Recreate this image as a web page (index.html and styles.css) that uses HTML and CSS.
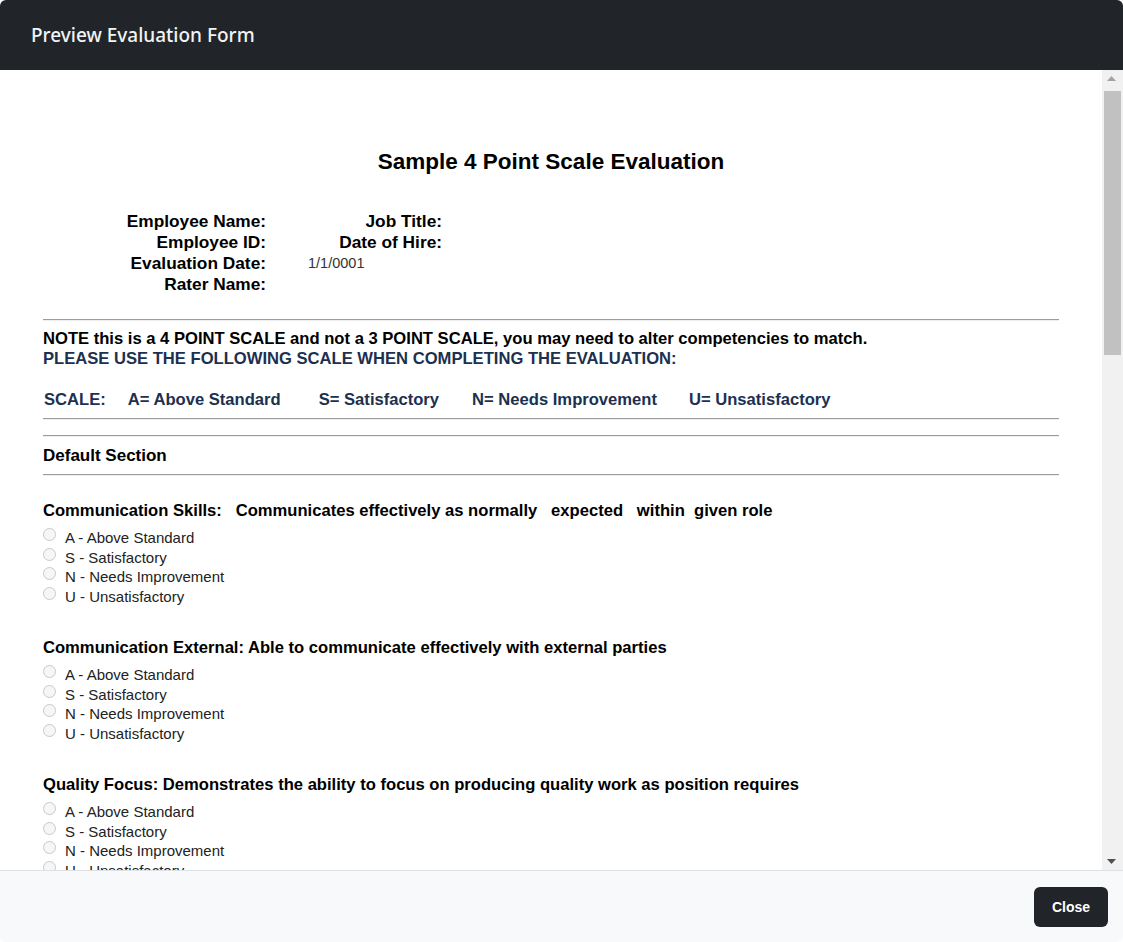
FILE: index.html
```html
<!DOCTYPE html>
<html lang="en">
<head>
  <meta charset="UTF-8">
  <meta name="viewport" content="width=device-width, initial-scale=1.0">
  <title>Preview Evaluation Form</title>
  <link rel="stylesheet" href="styles.css">
</head>
<body>
  <div class="modal">
    <div class="modal-header">
      <h5>Preview Evaluation Form</h5>
    </div>
    <div class="modal-body">
      <div class="preview">
        <h2 class="form-title">Sample 4 Point Scale Evaluation</h2>
        <div class="info-grid">
          <div class="lbl">Employee Name:</div>
          <div class="lbl">Job Title:</div>
          <div class="lbl">Employee ID:</div>
          <div class="lbl">Date of Hire:</div>
          <div class="lbl">Evaluation Date:</div>
          <div class="val">1/1/0001</div>
          <div class="lbl">Rater Name:</div>
          <div></div>
        </div>
        <hr class="hr-info">
        <p class="note">NOTE this is a 4 POINT SCALE and not a 3 POINT SCALE, you may need to alter competencies to match.</p>
        <p class="scale-intro">PLEASE USE THE FOLLOWING SCALE WHEN COMPLETING THE EVALUATION:</p>
        <div class="scale">
          <span class="s-head">SCALE:</span>
          <span class="s-a">A= Above Standard</span>
          <span class="s-s">S= Satisfactory</span>
          <span class="s-n">N= Needs Improvement</span>
          <span>U= Unsatisfactory</span>
        </div>
        <hr class="hr-scale">
        <hr class="hr-section">
        <h3 class="section-title">Default Section</h3>
        <hr class="hr-after">

        <div class="question">
          <div class="q-title">Communication Skills:   Communicates effectively as normally   expected   within  given role</div>
          <label class="opt"><span class="radio"></span>A - Above Standard</label>
          <label class="opt"><span class="radio"></span>S - Satisfactory</label>
          <label class="opt"><span class="radio"></span>N - Needs Improvement</label>
          <label class="opt"><span class="radio"></span>U - Unsatisfactory</label>
        </div>

        <div class="question">
          <div class="q-title">Communication External: Able to communicate effectively with external parties</div>
          <label class="opt"><span class="radio"></span>A - Above Standard</label>
          <label class="opt"><span class="radio"></span>S - Satisfactory</label>
          <label class="opt"><span class="radio"></span>N - Needs Improvement</label>
          <label class="opt"><span class="radio"></span>U - Unsatisfactory</label>
        </div>

        <div class="question">
          <div class="q-title">Quality Focus: Demonstrates the ability to focus on producing quality work as position requires</div>
          <label class="opt"><span class="radio"></span>A - Above Standard</label>
          <label class="opt"><span class="radio"></span>S - Satisfactory</label>
          <label class="opt"><span class="radio"></span>N - Needs Improvement</label>
          <label class="opt"><span class="radio"></span>U - Unsatisfactory</label>
        </div>
      </div>
      <div class="scrollbar">
        <div class="sb-btn"><svg width="9" height="5" viewBox="0 0 9 5"><path d="M0 5 L4.5 0 L9 5 Z" fill="#a3a3a3"/></svg></div>
        <div class="sb-track"><div class="sb-thumb"></div></div>
        <div class="sb-btn"><svg width="9" height="5" viewBox="0 0 9 5"><path d="M0 0 L9 0 L4.5 5 Z" fill="#505050"/></svg></div>
      </div>
    </div>
    <div class="modal-footer">
      <button class="btn-close">Close</button>
    </div>
  </div>
</body>
</html>
```

FILE: styles.css
```css
html, body {
  margin: 0;
  padding: 0;
  height: 100%;
}
body {
  font-family: "Liberation Sans", Arial, sans-serif;
  background-color: #fff;
  overflow: hidden;
}
.modal {
  display: flex;
  flex-direction: column;
  height: 942px;
  border-radius: 6px;
  overflow: hidden;
  background-color: #fff;
}
.modal-header {
  height: 70px;
  flex: none;
  display: flex;
  align-items: center;
  padding: 0 31px;
  background-color: #212529;
}
.modal-header h5 {
  margin: 0;
  font-family: "Noto Sans", sans-serif;
  font-size: 19px;
  font-weight: 500;
  color: #f1f3f5;
}
.modal-body {
  flex: 1;
  display: flex;
  min-height: 0;
  overflow: hidden;
}
.preview {
  flex: 1;
  padding: 78px 43px 0 43px;
  overflow: hidden;
  color: #000;
}
.form-title {
  margin: 0 0 35px;
  text-align: center;
  font-size: 22.5px;
  line-height: 28px;
  font-weight: bold;
}
.info-grid {
  display: grid;
  grid-template-columns: 223px 176px;
  font-size: 17.3px;
  line-height: 21px;
  font-weight: bold;
}
.info-grid .lbl {
  text-align: right;
}
.info-grid .val {
  font-weight: normal;
  font-size: 14.5px;
  color: #333;
  padding-left: 42px;
}
hr {
  margin: 0;
  border: 0;
  border-top: 1px solid #9c9c9c;
  border-bottom: 1px solid #eee;
}
.hr-info {
  margin-top: 24px;
}
.note {
  margin: 8px 0 0;
  font-size: 16.6px;
  line-height: 20px;
  font-weight: bold;
}
.scale-intro {
  margin: 0;
  font-size: 16.6px;
  line-height: 20px;
  font-weight: bold;
  color: #1c3050;
}
.scale {
  margin: 21px 0 0 1px;
  font-size: 16.6px;
  line-height: 20px;
  font-weight: bold;
  color: #1c3050;
  display: flex;
}
.scale span {
  margin-right: 32px;
}
.scale .s-head {
  margin-right: 22px;
}
.scale .s-a {
  margin-right: 38px;
}
.scale .s-s {
  margin-right: 33px;
}
.hr-scale {
  margin-top: 8px;
}
.hr-section {
  margin-top: 15px;
}
.section-title {
  margin: 8px 0 0;
  font-size: 17px;
  line-height: 22px;
  font-weight: bold;
}
.hr-after {
  margin-top: 7px;
}
.question {
  margin-top: 25px;
  height: 112px;
}
.q-title {
  white-space: pre-wrap;
  font-size: 16.6px;
  line-height: 20px;
  font-weight: bold;
  margin-bottom: 7px;
}
.opt {
  display: flex;
  align-items: flex-start;
  font-size: 15px;
  line-height: 19.5px;
  color: #222;
}
.radio {
  width: 11px;
  height: 11px;
  margin: 0 9px 0 0;
  border: 1px solid #c9c9c9;
  border-radius: 50%;
  background-color: #f6f6f6;
  flex: none;
}
.scrollbar {
  width: 21px;
  flex: none;
  display: flex;
  flex-direction: column;
  background-color: #f1f1f1;
}
.sb-btn {
  height: 17px;
  display: flex;
  align-items: center;
  justify-content: center;
  padding-right: 2px;
}
.sb-track {
  flex: 1;
  padding: 4px 2px 0;
}
.sb-thumb {
  height: 264px;
  background-color: #c1c1c1;
}
.modal-footer {
  height: 71px;
  flex: none;
  display: flex;
  align-items: center;
  justify-content: flex-end;
  padding: 0 15px;
  border-top: 1px solid #dee2e6;
  background-color: #f8f9fa;
}
.btn-close {
  width: 74px;
  height: 40px;
  border: 0;
  border-radius: 6px;
  background-color: #212529;
  color: #fff;
  font-family: "Liberation Sans", Arial, sans-serif;
  font-size: 14px;
  font-weight: bold;
  cursor: pointer;
}
```
